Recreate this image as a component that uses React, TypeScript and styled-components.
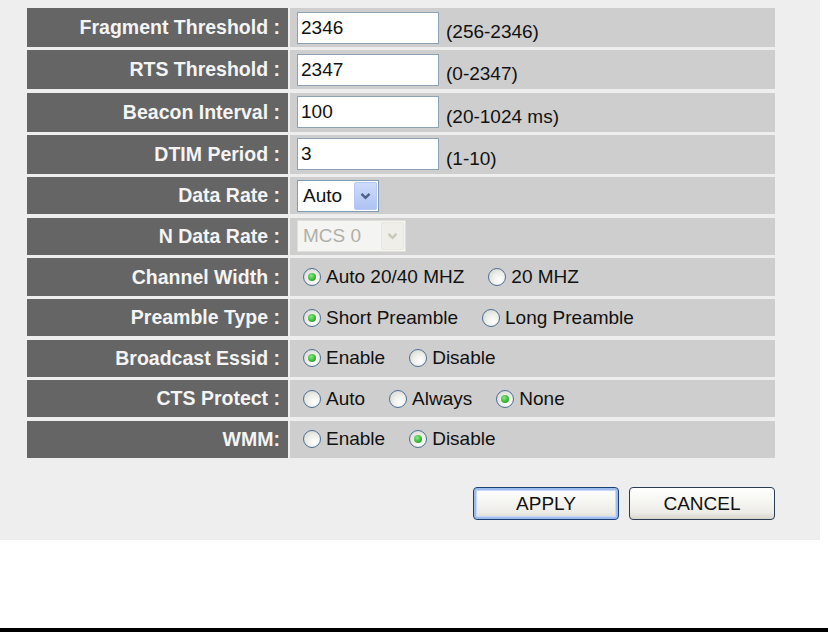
import styled, { createGlobalStyle } from "styled-components";

const GlobalStyle = createGlobalStyle`
  html, body {
    margin: 0;
    padding: 0;
    background: #ffffff;
  }
  * {
    box-sizing: border-box;
  }
`;

type Option = { label: string; checked?: boolean };

type RowSpec =
  | { kind: "input"; label: string; value: string; hint: string }
  | { kind: "select"; label: string; value: string; width: number; disabled?: boolean }
  | { kind: "radio"; label: string; options: Option[] };

const rows: RowSpec[] = [
  { kind: "input", label: "Fragment Threshold :", value: "2346", hint: "(256-2346)" },
  { kind: "input", label: "RTS Threshold :", value: "2347", hint: "(0-2347)" },
  { kind: "input", label: "Beacon Interval :", value: "100", hint: "(20-1024 ms)" },
  { kind: "input", label: "DTIM Period :", value: "3", hint: "(1-10)" },
  { kind: "select", label: "Data Rate :", value: "Auto", width: 82 },
  { kind: "select", label: "N Data Rate :", value: "MCS 0", width: 109, disabled: true },
  {
    kind: "radio",
    label: "Channel Width :",
    options: [{ label: "Auto 20/40 MHZ", checked: true }, { label: "20 MHZ" }],
  },
  {
    kind: "radio",
    label: "Preamble Type :",
    options: [{ label: "Short Preamble", checked: true }, { label: "Long Preamble" }],
  },
  {
    kind: "radio",
    label: "Broadcast Essid :",
    options: [{ label: "Enable", checked: true }, { label: "Disable" }],
  },
  {
    kind: "radio",
    label: "CTS Protect :",
    options: [{ label: "Auto" }, { label: "Always" }, { label: "None", checked: true }],
  },
  {
    kind: "radio",
    label: "WMM:",
    options: [{ label: "Enable" }, { label: "Disable", checked: true }],
  },
];

const Chevron = ({ color }: { color: string }) => (
  <svg width="11" height="8" viewBox="0 0 11 8">
    <path d="M1.5 1.8 L5.5 5.8 L9.5 1.8" fill="none" stroke={color} strokeWidth="2.4" />
  </svg>
);

const App: React.FC = () => {
  return (
    <Screen>
      <GlobalStyle />
      <Panel>
        <Table>
          {rows.map((row) => (
            <Row key={row.label} $tall={row.kind === "input"}>
              <Label>{row.label}</Label>
              <Cell>
                {row.kind === "input" && (
                  <>
                    <TextInput type="text" defaultValue={row.value} />
                    <Hint>{row.hint}</Hint>
                  </>
                )}
                {row.kind === "select" && (
                  <SelectBox $width={row.width} $disabled={row.disabled}>
                    <SelectText $disabled={row.disabled}>{row.value}</SelectText>
                    <DropButton $disabled={row.disabled}>
                      <Chevron color={row.disabled ? "#c9c7ba" : "#4d6185"} />
                    </DropButton>
                  </SelectBox>
                )}
                {row.kind === "radio" &&
                  row.options.map((opt) => (
                    <RadioOption key={opt.label}>
                      <Radio $checked={opt.checked} />
                      <span>{opt.label}</span>
                    </RadioOption>
                  ))}
              </Cell>
            </Row>
          ))}
        </Table>
        <ButtonBar>
          <XpButton type="button" $primary>APPLY</XpButton>
          <XpButton type="button">CANCEL</XpButton>
        </ButtonBar>
      </Panel>
      <BottomBar />
    </Screen>
  );
};

export default App;

const Screen = styled.div`
  width: 828px;
  height: 632px;
  display: flex;
  flex-direction: column;
  background: #ffffff;
  font-family: "Liberation Sans", Arial, sans-serif;
`;

const Panel = styled.div`
  width: 820px;
  height: 540px;
  padding: 8px 0 0 27px;
  background: #eeeeee;
`;

const Table = styled.div`
  width: 748px;
  display: flex;
  flex-direction: column;
  gap: 3.3px;
`;

const Row = styled.div<{ $tall?: boolean }>`
  display: grid;
  grid-template-columns: 261px 485px;
  column-gap: 2px;
  height: ${(p) => (p.$tall ? "39px" : "37.3px")};
`;

const Label = styled.div`
  display: flex;
  align-items: center;
  justify-content: flex-end;
  padding-right: 8px;
  background: #656565;
  color: #f4f4f4;
  font-size: 19.5px;
  font-weight: bold;
  white-space: nowrap;
`;

const Cell = styled.div`
  display: flex;
  align-items: center;
  padding-left: 7px;
  background: #cecece;
  color: #111111;
  font-size: 19px;
  white-space: nowrap;
`;

const TextInput = styled.input`
  width: 142px;
  height: 32px;
  padding: 0 3px;
  border: 1px solid #8ea2b6;
  background: #ffffff;
  color: #111111;
  font-family: "Liberation Sans", Arial, sans-serif;
  font-size: 19px;
  outline: none;
`;

const Hint = styled.span`
  align-self: flex-end;
  margin: 0 0 4px 7px;
  line-height: 22px;
`;

const SelectBox = styled.div<{ $width: number; $disabled?: boolean }>`
  width: ${(p) => p.$width}px;
  height: 32px;
  display: flex;
  align-items: center;
  justify-content: space-between;
  padding: 1px;
  border: 1px solid ${(p) => (p.$disabled ? "#e0dfd8" : "#7f9db9")};
  background: ${(p) => (p.$disabled ? "#f4f4f2" : "#ffffff")};
`;

const SelectText = styled.span<{ $disabled?: boolean }>`
  padding-left: 4px;
  color: ${(p) => (p.$disabled ? "#b0b0a8" : "#111111")};
`;

const DropButton = styled.div<{ $disabled?: boolean }>`
  width: 23px;
  height: 100%;
  display: flex;
  align-items: center;
  justify-content: center;
  border: 1px solid ${(p) => (p.$disabled ? "#e8e7e0" : "#b6c9f2")};
  border-radius: 2px;
  background: ${(p) =>
    p.$disabled
      ? "#efeee8"
      : "linear-gradient(180deg, #cfdcfb 0%, #b9cdf7 60%, #aec3f3 100%)"};
`;

const RadioOption = styled.label`
  display: flex;
  align-items: center;
  gap: 5px;
  margin-right: 18px;
`;

const Radio = styled.span<{ $checked?: boolean }>`
  position: relative;
  width: 18px;
  height: 18px;
  margin-left: 6px;
  border: 1px solid #4d6f94;
  border-radius: 50%;
  background: radial-gradient(circle at 65% 70%, #ffffff 0%, #eeeeea 45%, #d2d2cc 100%);

  &::after {
    content: "";
    display: ${(p) => (p.$checked ? "block" : "none")};
    position: absolute;
    top: 4px;
    left: 4px;
    width: 8px;
    height: 8px;
    border-radius: 50%;
    background: radial-gradient(circle at 40% 35%, #8fe68c 0%, #3fbf3b 50%, #1e8f1c 100%);
  }
`;

const ButtonBar = styled.div`
  width: 748px;
  display: flex;
  justify-content: flex-end;
  gap: 10px;
  margin-top: 29px;
`;

const XpButton = styled.button<{ $primary?: boolean }>`
  width: 146px;
  height: 33px;
  padding: 0;
  border: 1px solid ${(p) => (p.$primary ? "#1c3f74" : "#2b3c52")};
  border-radius: 4px;
  background: linear-gradient(180deg, #ffffff 0%, #f6f6f3 40%, #ecebe6 80%, #d8d4cb 100%);
  box-shadow: ${(p) =>
    p.$primary ? "inset 0 0 0 2px #9ebcee, inset 0 0 0 3px #c8daf7" : "none"};
  color: #111111;
  font-family: "Liberation Sans", Arial, sans-serif;
  font-size: 19px;
  cursor: pointer;
`;

const BottomBar = styled.div`
  margin-top: auto;
  height: 4px;
  background: #000000;
`;
